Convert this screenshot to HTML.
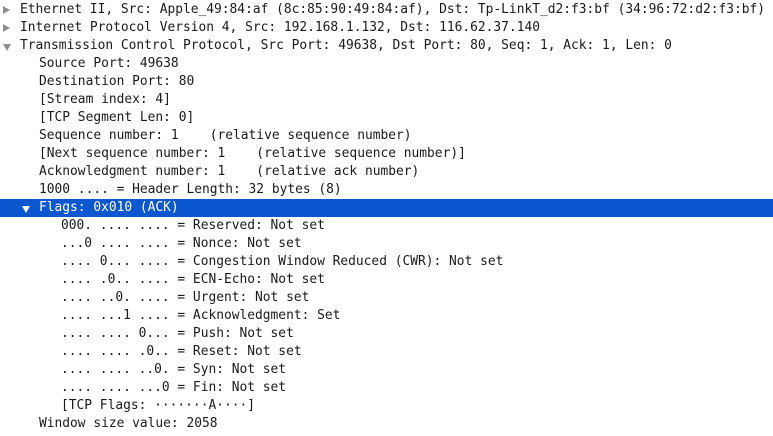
<!DOCTYPE html>
<html style="overflow:hidden;height:436px"><head><style>
html,body{margin:0;background:#fff;width:773px;height:436px;overflow:hidden}
body{position:relative;font-family:"DejaVu Sans Mono","Liberation Mono",monospace;font-size:12.9px;color:#1a1a1a}
.r{position:absolute;left:0;width:773px;height:18px;line-height:18px;white-space:pre}
.rt{position:absolute;top:5px;width:0;height:0;border-left:7px solid #8e8e8e;border-top:4px solid transparent;border-bottom:4px solid transparent}
.dn{position:absolute;top:7px;width:0;height:0;border-top:7px solid #8e8e8e;border-left:4px solid transparent;border-right:4px solid transparent}
.sel{background:#0b57d0;color:#fff}
.sel .dn{border-top-color:#fff}
</style></head><body>
<div class="r" style="top:1px"><span class="rt" style="left:3px"></span><span style="position:absolute;left:20px">Ethernet II, Src: Apple_49:84:af (8c:85:90:49:84:af), Dst: Tp-LinkT_d2:f3:bf (34:96:72:d2:f3:bf)</span></div>
<div class="r" style="top:19px"><span class="rt" style="left:3px"></span><span style="position:absolute;left:20px">Internet Protocol Version 4, Src: 192.168.1.132, Dst: 116.62.37.140</span></div>
<div class="r" style="top:37px"><span class="dn" style="left:3px"></span><span style="position:absolute;left:20px">Transmission Control Protocol, Src Port: 49638, Dst Port: 80, Seq: 1, Ack: 1, Len: 0</span></div>
<div class="r" style="top:55px"><span style="position:absolute;left:39px">Source Port: 49638</span></div>
<div class="r" style="top:73px"><span style="position:absolute;left:39px">Destination Port: 80</span></div>
<div class="r" style="top:91px"><span style="position:absolute;left:39px">[Stream index: 4]</span></div>
<div class="r" style="top:109px"><span style="position:absolute;left:39px">[TCP Segment Len: 0]</span></div>
<div class="r" style="top:127px"><span style="position:absolute;left:39px">Sequence number: 1    (relative sequence number)</span></div>
<div class="r" style="top:145px"><span style="position:absolute;left:39px">[Next sequence number: 1    (relative sequence number)]</span></div>
<div class="r" style="top:163px"><span style="position:absolute;left:39px">Acknowledgment number: 1    (relative ack number)</span></div>
<div class="r" style="top:181px"><span style="position:absolute;left:39px">1000 .... = Header Length: 32 bytes (8)</span></div>
<div class="r sel" style="top:199px"><span class="dn" style="left:22px"></span><span style="position:absolute;left:39px">Flags: 0x010 (ACK)</span></div>
<div class="r" style="top:217px"><span style="position:absolute;left:61px">000. .... .... = Reserved: Not set</span></div>
<div class="r" style="top:235px"><span style="position:absolute;left:61px">...0 .... .... = Nonce: Not set</span></div>
<div class="r" style="top:253px"><span style="position:absolute;left:61px">.... 0... .... = Congestion Window Reduced (CWR): Not set</span></div>
<div class="r" style="top:271px"><span style="position:absolute;left:61px">.... .0.. .... = ECN-Echo: Not set</span></div>
<div class="r" style="top:289px"><span style="position:absolute;left:61px">.... ..0. .... = Urgent: Not set</span></div>
<div class="r" style="top:307px"><span style="position:absolute;left:61px">.... ...1 .... = Acknowledgment: Set</span></div>
<div class="r" style="top:325px"><span style="position:absolute;left:61px">.... .... 0... = Push: Not set</span></div>
<div class="r" style="top:343px"><span style="position:absolute;left:61px">.... .... .0.. = Reset: Not set</span></div>
<div class="r" style="top:361px"><span style="position:absolute;left:61px">.... .... ..0. = Syn: Not set</span></div>
<div class="r" style="top:379px"><span style="position:absolute;left:61px">.... .... ...0 = Fin: Not set</span></div>
<div class="r" style="top:397px"><span style="position:absolute;left:61px">[TCP Flags: ·······A····]</span></div>
<div class="r" style="top:415px"><span style="position:absolute;left:39px">Window size value: 2058</span></div>
</body></html>
